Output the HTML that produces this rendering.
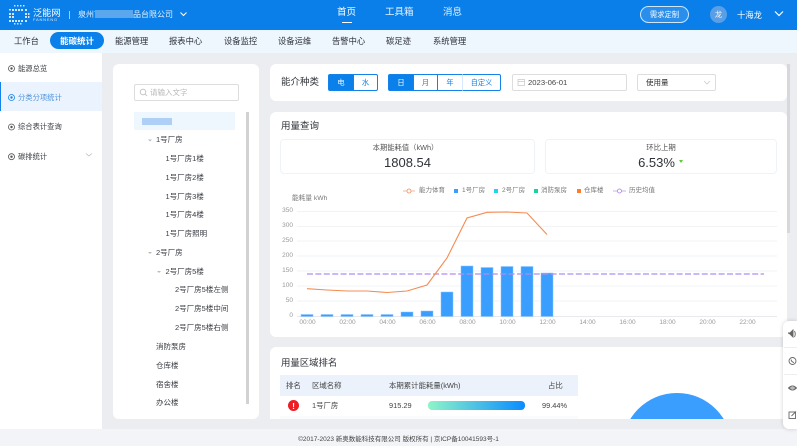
<!DOCTYPE html>
<html lang="zh"><head><meta charset="utf-8"><title>能碳统计</title>
<style>
*{box-sizing:border-box}
html,body{margin:0;padding:0;width:797px;height:446px;overflow:hidden;background:#f3f4f8}
body{font-family:"Liberation Sans","Noto Sans CJK SC",sans-serif;color:#333;position:relative}
#w{position:absolute;left:0;top:0;width:797px;height:446px;overflow:hidden;filter:blur(.25px)}
.a{position:absolute}
.t{position:absolute;white-space:nowrap;line-height:14px;height:14px}
.c{transform:translateX(-50%)}
.r{transform:translateX(-100%)}
.card{position:absolute;background:#fff;border-radius:6px}
.n2{font-size:8.3px;top:34px;color:#2f3238}
.s{font-size:7.3px;color:#3a3d44}
.tr{font-size:7.5px;color:#3a3d44}
.seg{position:absolute;top:74px;height:17px;font-size:7.2px;text-align:center;line-height:15px;color:#1482e8;border:1px solid #1482e8;background:#fff}
.lg{font-size:6.5px;top:184px;color:#777}
.sq{position:absolute;top:189px;width:4px;height:4px}
.ax{font-size:6.5px;color:#999}
.th{font-size:7.4px;color:#444;top:378.5px}
.td{font-size:7.4px;color:#444;top:398.5px}
</style></head><body><div id="w">
<div class="a" style="left:0;top:0;width:797px;height:429px;background:#ecedf1"></div>
<div class="a" style="left:0;top:0;width:797px;height:30px;background:#0a7fe9"></div>
<svg class="a" style="left:7px;top:3px" width="24" height="23">
<g fill="#cfe6fb"><rect x="7" y="2" width="1.5" height="1.5"/><rect x="10" y="2" width="1.5" height="1.5"/><rect x="13" y="2" width="1.5" height="1.5"/><rect x="16" y="2" width="1.5" height="1.5"/><rect x="2" y="6" width="2" height="1.5"/><rect x="5" y="6" width="2" height="2"/><rect x="8" y="6" width="2" height="2"/><rect x="11" y="6" width="2" height="2"/><rect x="14" y="6" width="2" height="2"/><rect x="18" y="6" width="2" height="2"/><rect x="2" y="10" width="2" height="2"/><rect x="5" y="10" width="2" height="2"/><rect x="18" y="10" width="2" height="2"/><rect x="21" y="10" width="1.5" height="2"/><rect x="2" y="13" width="2" height="2"/><rect x="5" y="13" width="2" height="2"/><rect x="18" y="13" width="2" height="2"/><rect x="21" y="13" width="1.5" height="2"/><rect x="2" y="17" width="2" height="2"/><rect x="5" y="17" width="2" height="2"/><rect x="8" y="17" width="2" height="2"/><rect x="11" y="17" width="2" height="2"/><rect x="14" y="17" width="2" height="2"/><rect x="18" y="17" width="2" height="2"/><rect x="7" y="20" width="1.5" height="1.5"/><rect x="10" y="20" width="1.5" height="1.5"/><rect x="13" y="20" width="1.5" height="1.5"/></g></svg>
<div class="t" style="left:33px;top:6px;font-size:9.2px;color:#fff">泛能网</div>
<div class="t" style="left:33px;top:13px;font-size:4px;color:#d2e8fb;letter-spacing:.8px">FANNENG</div>
<div class="a" style="left:69px;top:11px;width:1px;height:8px;background:#9fcdf5"></div>
<div class="t" style="left:78px;top:7.5px;font-size:8px;color:#e6f2fd">泉州市</div>
<div class="a" style="left:95px;top:10px;width:38px;height:8px;background:#5ba7ee"></div>
<div class="t" style="left:133px;top:7.5px;font-size:8px;color:#e6f2fd">品台限公司</div>
<svg class="a" style="left:179px;top:10px" width="10" height="9"><path d="M1.500 2.500L4.500 5.500L7.500 2.500" fill="none" stroke="#fff" stroke-width="1"/></svg>
<div class="t c" style="left:346.5px;top:5.5px;font-size:9.5px;color:#fff">首页</div>
<div class="a" style="left:342px;top:22px;width:10px;height:1px;background:#fff"></div>
<div class="t" style="left:385px;top:5.5px;font-size:9.5px;color:#eaf4fe">工具箱</div>
<div class="t" style="left:443px;top:5.5px;font-size:9.5px;color:#eaf4fe">消息</div>
<div class="a" style="left:640px;top:6px;width:49px;height:17px;border:1px solid #cfe6fb;border-radius:9px;background:#2a8fec"></div>
<div class="t c" style="left:664.5px;top:7.5px;font-size:7.3px;color:#fff">需求定制</div>
<div class="a" style="left:710px;top:6px;width:17px;height:17px;border-radius:50%;background:#5a9fe6"></div>
<div class="t c" style="left:718.5px;top:8px;font-size:7.3px;color:#fff">龙</div>
<div class="t" style="left:737px;top:8px;font-size:8.3px;color:#fff">十海龙</div>
<svg class="a" style="left:774px;top:10px" width="10" height="8"><path d="M1 1.500L5 5.500L9 1.500" fill="none" stroke="#fff" stroke-width="1.2"/></svg>

<div class="a" style="left:0;top:30px;width:797px;height:23px;background:#eef6fe"></div>
<div class="t n2" style="left:14px">工作台</div>
<div class="a" style="left:50px;top:32px;width:54px;height:17px;border-radius:9px;background:#0a80ea"></div>
<div class="t n2" style="left:60px;color:#fff;font-weight:bold;font-size:8.5px">能碳统计</div>
<div class="t n2" style="left:115px">能源管理</div>
<div class="t n2" style="left:169px">报表中心</div>
<div class="t n2" style="left:224px">设备监控</div>
<div class="t n2" style="left:278px">设备运维</div>
<div class="t n2" style="left:332px">告警中心</div>
<div class="t n2" style="left:386px">碳足迹</div>
<div class="t n2" style="left:433px">系统管理</div>

<div class="a" style="left:0;top:53px;width:102px;height:376px;background:#fff"></div>
<div class="a" style="left:0;top:82px;width:102px;height:29px;background:#eaf3fe;border-left:1px solid #1482e8"></div>
<svg class="a" style="left:7px;top:64px" width="10" height="100"><g fill="none" stroke="#555" stroke-width=".8"><circle cx="4.500" cy="4.500" r="3"/><circle cx="4.500" cy="33.500" r="3" stroke="#1482e8"/><circle cx="4.500" cy="63" r="3"/><circle cx="4.500" cy="92.700" r="3"/></g><g fill="#555"><circle cx="4.500" cy="4.500" r="1.200"/><circle cx="4.500" cy="33.500" r="1.200" fill="#1482e8"/><circle cx="4.500" cy="63" r="1.200"/><circle cx="4.500" cy="92.700" r="1.200"/></g></svg>
<div class="t s" style="left:18px;top:61.5px">能源总览</div>
<div class="t s" style="left:18px;top:90.5px;color:#4d93dc">分类分项统计</div>
<div class="t s" style="left:18px;top:120px">综合表计查询</div>
<div class="t s" style="left:18px;top:149.5px">碳排统计</div>
<svg class="a" style="left:85px;top:152px" width="8" height="6"><path d="M1 1.500L4 4L7 1.500" fill="none" stroke="#bbb" stroke-width=".8"/></svg>

<div class="card" style="left:113px;top:64px;width:146px;height:355px"></div>
<div class="a" style="left:134px;top:84px;width:105px;height:17px;border:1px solid #ddd;border-radius:2px"></div>
<svg class="a" style="left:139px;top:88px" width="9" height="9"><circle cx="4" cy="4" r="2.800" fill="none" stroke="#bbb" stroke-width=".8"/><path d="M6 6L8 8" stroke="#bbb" stroke-width=".8"/></svg>
<div class="t" style="left:150px;top:85.5px;font-size:7.5px;color:#b9b9b9">请输入文字</div>
<div class="a" style="left:134px;top:112px;width:101px;height:18px;background:#eef6fe"></div>
<div class="a" style="left:142px;top:118px;width:30px;height:7px;background:#aecff6"></div>
<div class="a" style="left:246px;top:112px;width:3px;height:292px;background:#d2d2d2"></div>
<svg class="a" style="left:146px;top:137px" width="18" height="138"><path d="M2 2.500H6L4 4.500Z M2 115H6L4 117Z M11 134H15L13 136Z" fill="#bbb"/></svg>
<div class="t tr" style="left:156px;top:133px">1号厂房</div>
<div class="t tr" style="left:165.500px;top:151.700px">1号厂房1楼</div>
<div class="t tr" style="left:165.500px;top:170.700px">1号厂房2楼</div>
<div class="t tr" style="left:165.500px;top:189.700px">1号厂房3楼</div>
<div class="t tr" style="left:165.500px;top:208px">1号厂房4楼</div>
<div class="t tr" style="left:165.500px;top:227px">1号厂房照明</div>
<div class="t tr" style="left:156px;top:245.700px">2号厂房</div>
<div class="t tr" style="left:165.500px;top:264.700px">2号厂房5楼</div>
<div class="t tr" style="left:175px;top:283px">2号厂房5楼左侧</div>
<div class="t tr" style="left:175px;top:302px">2号厂房5楼中间</div>
<div class="t tr" style="left:175px;top:321px">2号厂房5楼右侧</div>
<div class="t tr" style="left:156px;top:339.700px">消防泵房</div>
<div class="t tr" style="left:156px;top:358.700px">仓库楼</div>
<div class="t tr" style="left:156px;top:377.700px">宿舍楼</div>
<div class="t tr" style="left:156px;top:396px">办公楼</div>

<div class="card" style="left:270px;top:64px;width:517px;height:37px"></div>
<div class="t" style="left:281px;top:76px;font-size:9.5px;color:#2f3238">能介种类</div>
<div class="seg" style="left:328px;width:26px;background:#0a80ea;color:#fff;border-radius:2px 0 0 2px">电</div>
<div class="seg" style="left:353px;width:25px;border-radius:0 2px 2px 0">水</div>
<div class="seg" style="left:388px;width:26px;background:#0a80ea;color:#fff;border-radius:2px 0 0 2px">日</div>
<div class="seg" style="left:413px;width:25px">月</div>
<div class="seg" style="left:437px;width:26px">年</div>
<div class="seg" style="left:462px;width:39px;border-left-color:#d8e9fb;border-radius:0 2px 2px 0">自定义</div>
<div class="a" style="left:512px;top:74px;width:115px;height:17px;border:1px solid #ddd;border-radius:2px"></div>
<svg class="a" style="left:517px;top:78px" width="9" height="9"><rect x="1" y="1.500" width="6.500" height="6" fill="none" stroke="#ccc" stroke-width=".8"/><path d="M1 3.500H7.500" stroke="#ccc" stroke-width=".8"/></svg>
<div class="t" style="left:528px;top:75.500px;font-size:7.7px;color:#444">2023-06-01</div>
<div class="a" style="left:637px;top:74px;width:79px;height:17px;border:1px solid #ddd;border-radius:2px"></div>
<div class="t" style="left:646px;top:75.500px;font-size:7.500px;color:#333">使用量</div>
<svg class="a" style="left:703px;top:80px" width="8" height="6"><path d="M1 1L4 4L7 1" fill="none" stroke="#ccc" stroke-width=".8"/></svg>
<div class="a" style="left:787px;top:64px;width:3px;height:169px;background:#d8d8dc"></div>

<div class="card" style="left:270px;top:112px;width:517px;height:225px"></div>
<div class="t" style="left:281px;top:120px;font-size:9.500px;color:#2f3238">用量查询</div>
<div class="a" style="left:280px;top:139px;width:255px;height:35px;border:1px solid #eef3f9;border-radius:4px"></div>
<div class="a" style="left:545px;top:139px;width:232px;height:35px;border:1px solid #eef3f9;border-radius:4px"></div>
<div class="t c" style="left:405.500px;top:141px;font-size:7.300px;color:#555">本期能耗值（kWh）</div>
<div class="t c" style="left:407.500px;top:155.500px;font-size:13px;color:#2f3238">1808.54</div>
<div class="t c" style="left:661px;top:141px;font-size:7.400px;color:#555">环比上期</div>
<div class="t c" style="left:656.500px;top:155.500px;font-size:13px;color:#2f3238">6.53%</div>
<div class="a" style="left:679px;top:160px;border-left:2px solid transparent;border-right:2px solid transparent;border-top:3px solid #58cc3e"></div>

<svg class="a" style="left:400px;top:186px" width="230" height="10"><path d="M3 5H15" stroke="#f7b999" stroke-width="1"/><circle cx="9" cy="5" r="2" fill="#fff" stroke="#f28a57" stroke-width=".8"/><path d="M213 5H226" stroke="#c9b2f0" stroke-width="1"/><circle cx="219.500" cy="5" r="2" fill="#fff" stroke="#a982ea" stroke-width=".8"/></svg>
<div class="t lg" style="left:419px">能力体育</div>
<div class="sq" style="left:454px;background:#3a9eff"></div><div class="t lg" style="left:462px">1号厂房</div>
<div class="sq" style="left:494px;background:#1fd4f0"></div><div class="t lg" style="left:502px">2号厂房</div>
<div class="sq" style="left:534px;background:#14d4a4"></div><div class="t lg" style="left:541px">消防泵房</div>
<div class="sq" style="left:577px;background:#ff7a33"></div><div class="t lg" style="left:584px">仓库楼</div>
<div class="t lg" style="left:629px">历史均值</div>
<div class="t ax" style="left:292px;top:192px;color:#777;font-size:6.700px">能耗量 kWh</div>

<svg class="a" style="left:270px;top:200px" width="517" height="130">
<g stroke="#f2f3f5" stroke-width="1"><path d="M27 11.500H507M27 26.500H507M27 41H507M27 56H507M27 71H507M27 86H507M27 101H507"/></g>
<path d="M27 116.500H507" stroke="#e8e9ec" stroke-width="1"/>
<g fill="#3a9eff" stroke="#8cc6fb" stroke-width=".5"><rect x="31" y="114.500" width="12" height="2"/><rect x="51" y="114.500" width="12" height="2"/><rect x="71" y="114.500" width="12" height="2"/><rect x="91" y="114.500" width="12" height="2"/><rect x="111" y="114.500" width="12" height="2"/><rect x="131" y="112" width="12" height="4.500"/><rect x="151" y="111" width="12" height="5.500"/><rect x="171" y="92" width="12" height="24.500"/><rect x="191" y="66" width="12" height="50.500"/><rect x="211" y="67.500" width="12" height="49"/><rect x="231" y="66.500" width="12" height="50"/><rect x="251" y="66.500" width="12" height="50"/><rect x="271" y="73" width="12" height="43.500"/></g>
<path d="M37 74H494" stroke="#b18cf0" stroke-width="1.300" stroke-dasharray="6 2.400" fill="none"/>
<path d="M37 88.700L57 90L77 91L97 91L117 92.500L137 91L157 85L177 58L197 18L217 12.300L237 12L257 13L277 34.500" fill="none" stroke="#f58b52" stroke-width="1.100"/>
</svg>
<div class="t ax r" style="left:293px;top:204px">350</div>
<div class="t ax r" style="left:293px;top:218.500px">300</div>
<div class="t ax r" style="left:293px;top:233.500px">250</div>
<div class="t ax r" style="left:293px;top:248.500px">200</div>
<div class="t ax r" style="left:293px;top:263.500px">150</div>
<div class="t ax r" style="left:293px;top:278.500px">100</div>
<div class="t ax r" style="left:293px;top:293.500px">50</div>
<div class="t ax r" style="left:293px;top:308.500px">0</div>
<div class="t ax c" style="left:307.500px;top:315.500px">00:00</div>
<div class="t ax c" style="left:347.500px;top:315.500px">02:00</div>
<div class="t ax c" style="left:387.500px;top:315.500px">04:00</div>
<div class="t ax c" style="left:427.500px;top:315.500px">06:00</div>
<div class="t ax c" style="left:467.500px;top:315.500px">08:00</div>
<div class="t ax c" style="left:507.500px;top:315.500px">10:00</div>
<div class="t ax c" style="left:547.500px;top:315.500px">12:00</div>
<div class="t ax c" style="left:587.500px;top:315.500px">14:00</div>
<div class="t ax c" style="left:627.500px;top:315.500px">16:00</div>
<div class="t ax c" style="left:667.500px;top:315.500px">18:00</div>
<div class="t ax c" style="left:707.500px;top:315.500px">20:00</div>
<div class="t ax c" style="left:747.500px;top:315.500px">22:00</div>

<div class="a" style="left:270px;top:347px;width:517px;height:72px;background:#fff;border-radius:6px 6px 0 0"></div>
<svg class="a" style="left:622px;top:393px" width="110" height="26"><circle cx="55" cy="55" r="55" fill="#3a9eff"/></svg>
<div class="a" style="left:280px;top:375px;width:298px;height:21px;background:#ebf2fb"></div>
<div class="a" style="left:280px;top:416px;width:298px;height:3px;background:#fafbfd"></div>
<div class="t" style="left:281px;top:355.500px;font-size:9.400px;color:#2f3238">用量区域排名</div>
<div class="t th" style="left:286px">排名</div>
<div class="t th" style="left:312px">区域名称</div>
<div class="t th" style="left:389px">本期累计能耗量(kWh)</div>
<div class="t th" style="left:548px">占比</div>
<div class="a" style="left:288px;top:400px;width:11px;height:11px;border-radius:50%;background:#ee1c25"></div>
<div class="t c" style="left:293.500px;top:398.500px;font-size:8.500px;color:#fff;font-weight:bold">!</div>
<div class="t td" style="left:312px">1号厂房</div>
<div class="t td" style="left:389px">915.29</div>
<div class="a" style="left:428px;top:401px;width:97px;height:9px;border-radius:4px;background:linear-gradient(90deg,#8ef5c8,#0a8cff)"></div>
<div class="t td" style="left:542px">99.44%</div>

<div class="a" style="left:783px;top:321px;width:14px;height:108px;background:#fff;border-radius:6px 0 0 6px;box-shadow:0 0 4px rgba(0,0,0,.18)"></div>
<div class="a" style="left:784px;top:347px;width:13px;height:1px;background:#eee"></div>
<div class="a" style="left:784px;top:374px;width:13px;height:1px;background:#eee"></div>
<svg class="a" style="left:788px;top:327px" width="9" height="96"><g fill="none" stroke="#666" stroke-width=".9"><path d="M0 6H2L5 3V10L2 7Z" fill="#666"/><path d="M6.500 4Q8 7 6.500 10"/><circle cx="4.500" cy="34" r="3.500"/><path d="M3 32.500Q3.500 35 6 35.500"/><path d="M.5 61Q4.500 57 8.500 61Q4.500 65 .5 61Z"/><path d="M.5 61H8.500"/><rect x="1" y="85" width="6.500" height="6.500"/><path d="M3.500 89L8 84.500"/></g></svg>

<div class="t c" style="left:398.500px;top:433px;height:13px;line-height:13px;font-size:6.500px;color:#444">©2017-2023 新奥数能科技有限公司 版权所有 | 京ICP备10041593号-1</div>
</div></body></html>
